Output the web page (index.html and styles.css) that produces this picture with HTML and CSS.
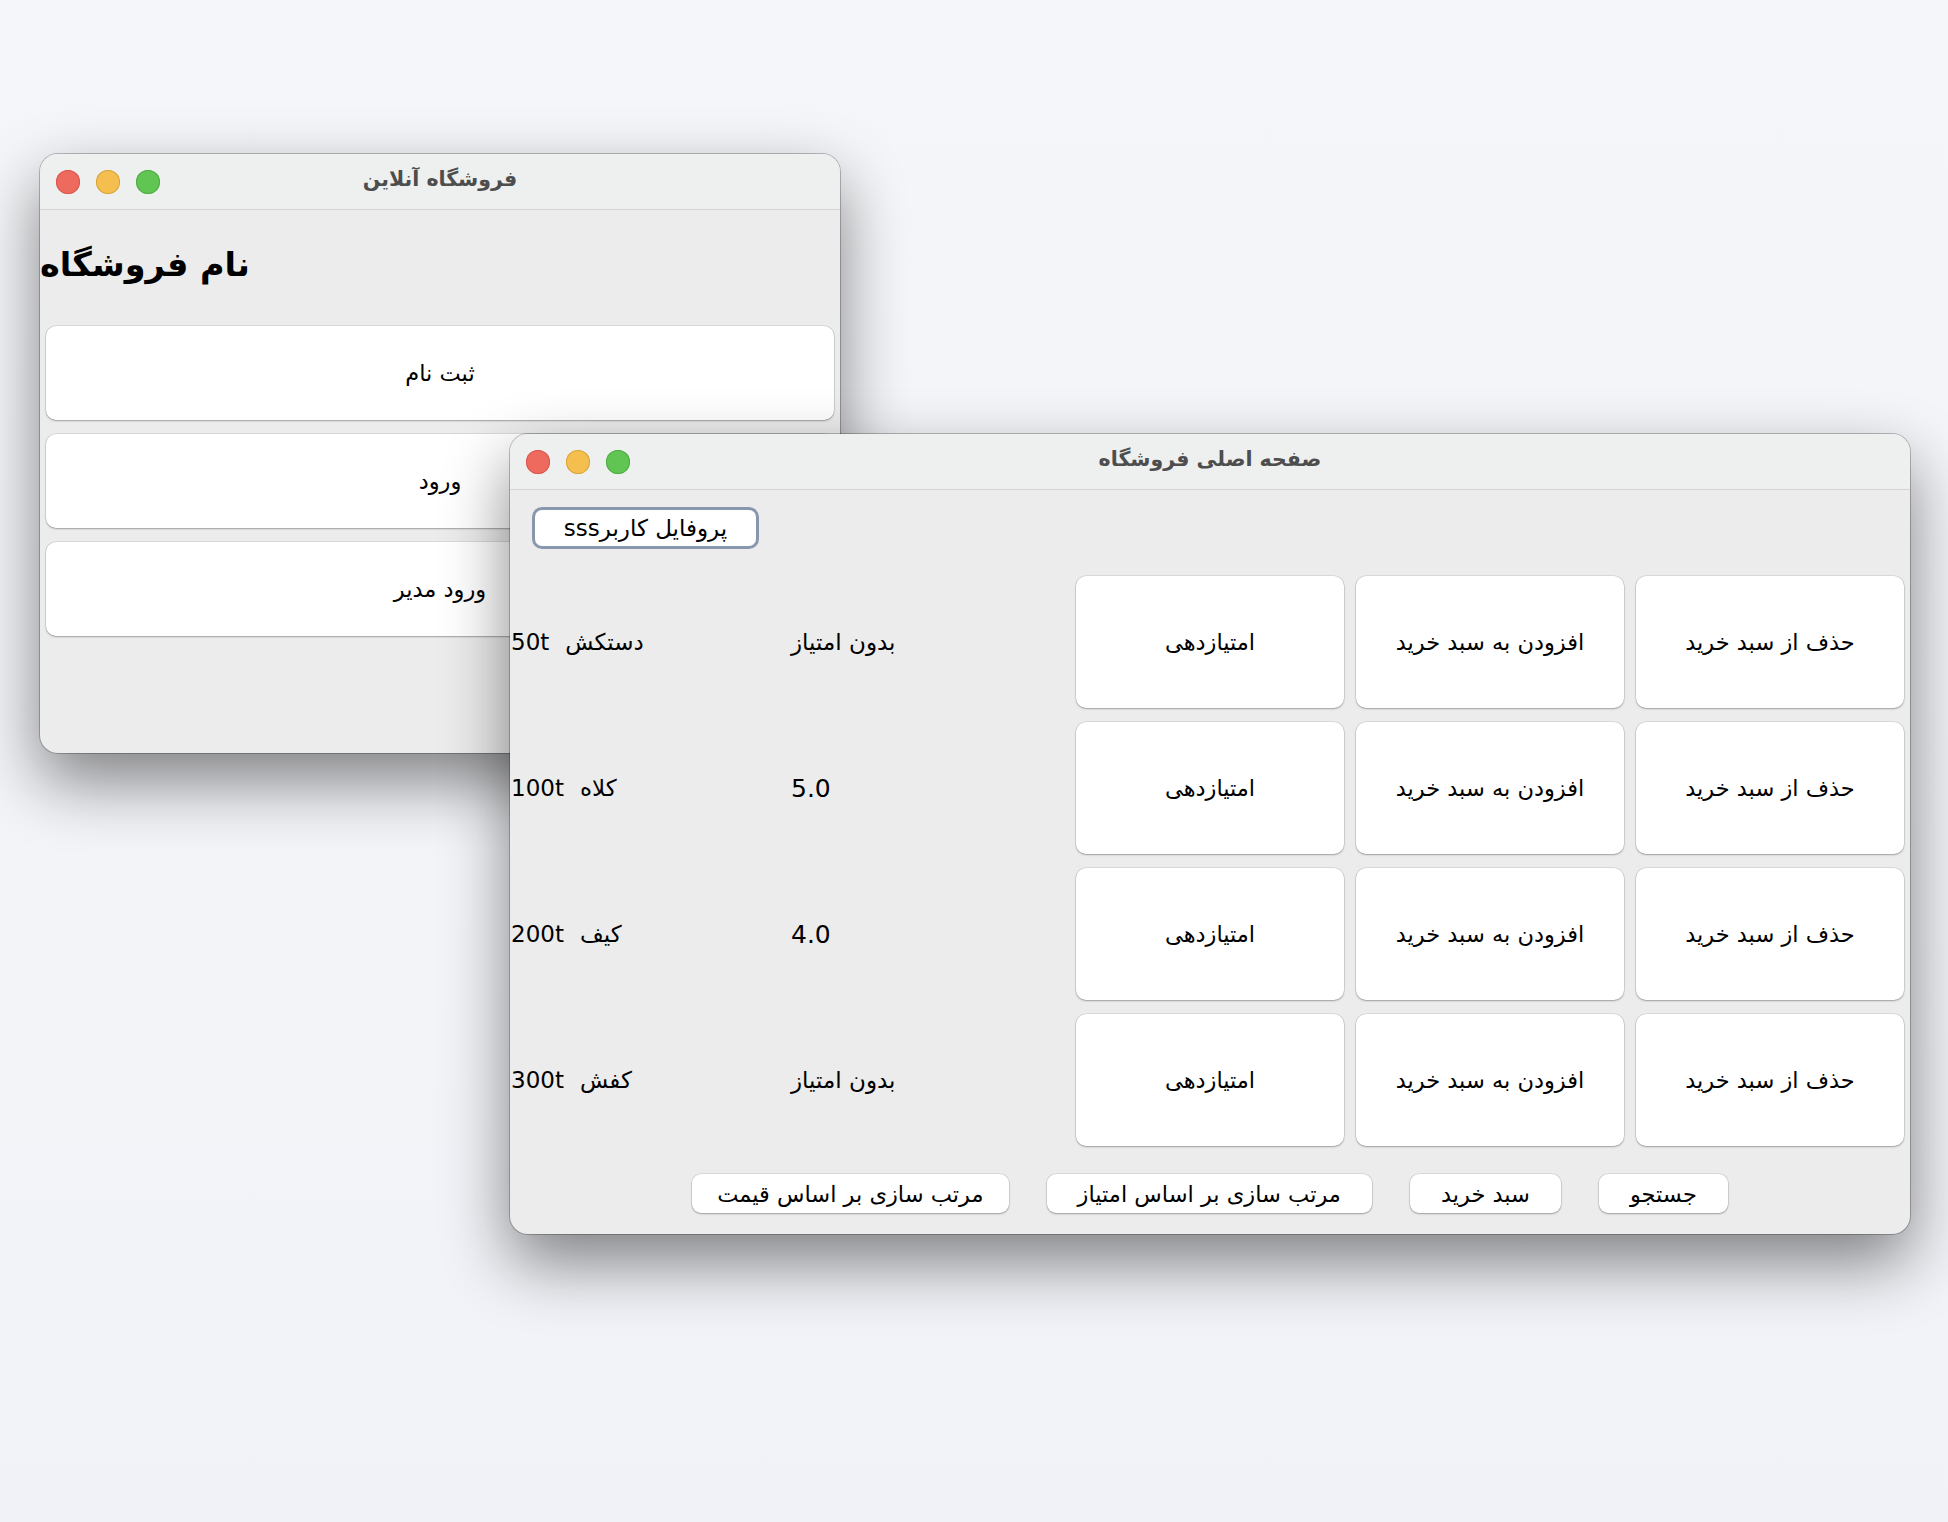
FILE: index.html
```html
<!DOCTYPE html>
<html lang="fa">
<head>
<meta charset="utf-8">
<title>فروشگاه آنلاین</title>
<link rel="stylesheet" href="styles.css">
</head>
<body>
<div class="desktop">
  <section class="window win-login">
    <header class="titlebar">
      <div class="lights"><span class="light red"></span><span class="light yellow"></span><span class="light green"></span></div>
      <div class="title">فروشگاه آنلاین</div>
      <div></div>
    </header>
    <div class="login-body">
      <h1 class="store-name">نام فروشگاه</h1>
      <div class="login-cell"><button class="btn tall">ثبت نام</button></div>
      <div class="login-cell"><button class="btn tall">ورود</button></div>
      <div class="login-cell"><button class="btn tall">ورود مدیر</button></div>
    </div>
  </section>

  <section class="window win-main">
    <header class="titlebar">
      <div class="lights"><span class="light red"></span><span class="light yellow"></span><span class="light green"></span></div>
      <div class="title">صفحه اصلی فروشگاه</div>
      <div></div>
    </header>
    <div class="main-top">
      <button class="btn profile" dir="rtl">پروفایل کاربرsss</button>
    </div>
    <div class="grid">
      <div class="cell label"><span class="price">50t</span><span class="pname">دستکش</span></div>
      <div class="cell label">بدون امتیاز</div>
      <div class="cell"><button class="btn tall">امتیازدهی</button></div>
      <div class="cell"><button class="btn tall">افزودن به سبد خرید</button></div>
      <div class="cell"><button class="btn tall">حذف از سبد خرید</button></div>

      <div class="cell label"><span class="price">100t</span><span class="pname">کلاه</span></div>
      <div class="cell label"><span class="num">5.0</span></div>
      <div class="cell"><button class="btn tall">امتیازدهی</button></div>
      <div class="cell"><button class="btn tall">افزودن به سبد خرید</button></div>
      <div class="cell"><button class="btn tall">حذف از سبد خرید</button></div>

      <div class="cell label"><span class="price">200t</span><span class="pname">کیف</span></div>
      <div class="cell label"><span class="num">4.0</span></div>
      <div class="cell"><button class="btn tall">امتیازدهی</button></div>
      <div class="cell"><button class="btn tall">افزودن به سبد خرید</button></div>
      <div class="cell"><button class="btn tall">حذف از سبد خرید</button></div>

      <div class="cell label"><span class="price">300t</span><span class="pname">کفش</span></div>
      <div class="cell label">بدون امتیاز</div>
      <div class="cell"><button class="btn tall">امتیازدهی</button></div>
      <div class="cell"><button class="btn tall">افزودن به سبد خرید</button></div>
      <div class="cell"><button class="btn tall">حذف از سبد خرید</button></div>
    </div>
    <div class="main-bottom" dir="rtl">
      <button class="btn small">جستجو</button>
      <button class="btn small">سبد خرید</button>
      <button class="btn small">مرتب سازی بر اساس امتیاز</button>
      <button class="btn small price-sort">مرتب سازی بر اساس قیمت</button>
    </div>
  </section>
</div>
</body>
</html>
```

FILE: styles.css
```css
* { box-sizing: border-box; }

html, body {
  margin: 0;
  padding: 0;
}

body {
  background: linear-gradient(180deg, #f5f6f9 0%, #f3f4f8 60%, #f1f2f7 100%);
  font-family: "DejaVu Sans", "Noto Sans", sans-serif;
  color: #000;
}

.desktop {
  position: relative;
  width: 1948px;
  height: 1522px;
  overflow: hidden;
}

.window {
  position: absolute;
  background: #ececec;
  border-radius: 18px;
  overflow: hidden;
  box-shadow: 0 0 0 1px rgba(0, 0, 0, 0.24), 0 28px 66px rgba(0, 0, 0, 0.48);
  display: flex;
  flex-direction: column;
}

.win-login {
  left: 40px;
  top: 154px;
  width: 800px;
  height: 599px;
}

.win-main {
  left: 510px;
  top: 434px;
  width: 1400px;
  height: 800px;
}

.titlebar {
  height: 56px;
  flex: none;
  background: #eeefef;
  border-bottom: 1px solid #d4d4d4;
  display: grid;
  grid-template-columns: 1fr auto 1fr;
  align-items: center;
}

.lights {
  display: flex;
  gap: 16px;
  padding-left: 16px;
}

.light {
  width: 24px;
  height: 24px;
  border-radius: 50%;
  display: block;
}
.light.red { background: #ee6a5f; box-shadow: inset 0 0 0 1px #d9574c; }
.light.yellow { background: #f5bf4f; box-shadow: inset 0 0 0 1px #d9a43c; }
.light.green { background: #61c554; box-shadow: inset 0 0 0 1px #4fab43; }

.title {
  font-size: 20.5px;
  font-weight: bold;
  color: #4d4d4d;
  padding-bottom: 6px;
}

/* login window */
.login-body {
  display: flex;
  flex-direction: column;
}

.store-name {
  margin: 0;
  height: 109px;
  display: flex;
  align-items: center;
  font-size: 33.5px;
  font-weight: bold;
}

.login-cell {
  height: 108px;
  padding: 7px 6px;
  display: flex;
}

.btn {
  font-family: "DejaVu Sans", "Noto Sans", sans-serif;
  background: #fff;
  border: none;
  border-radius: 10px;
  box-shadow: 0 0 0 0.5px rgba(0, 0, 0, 0.14), 0 1px 2px rgba(0, 0, 0, 0.28);
  color: #000;
  font-size: 22.5px;
  padding: 0;
  margin: 0;
}

.btn.tall {
  flex: 1;
  width: 100%;
  height: 100%;
}

/* main window */
.main-top {
  height: 79px;
  flex: none;
  padding: 17px 0 0 22px;
}

.btn.profile {
  width: 227px;
  height: 42px;
  border: 3px solid #8897ad;
  border-radius: 10px;
  box-shadow: none;
  font-size: 23px;
}

.grid {
  display: grid;
  grid-template-columns: repeat(5, 280px);
  grid-template-rows: repeat(4, 146px);
  flex: none;
}

.cell {
  padding: 7px 6px;
  display: flex;
}

.cell.label {
  padding: 0 0 0 1px;
  align-items: center;
  font-size: 23px;
}

.price { margin-right: 16px; }
.num { font-size: 25px; }

.main-bottom {
  flex: 1;
  display: flex;
  justify-content: center;
  align-items: flex-start;
  gap: 38px;
  padding-top: 21px;
}

.btn.small {
  height: 39px;
  padding: 0 31px;
  border-radius: 9px;
  font-size: 22.5px;
}

.btn.small.price-sort {
  padding: 0 25px;
}
```
